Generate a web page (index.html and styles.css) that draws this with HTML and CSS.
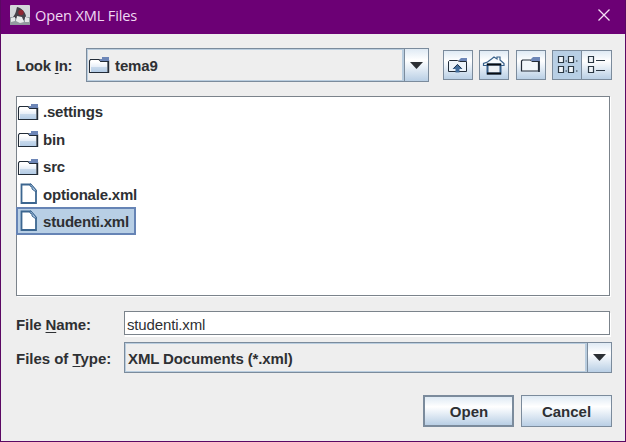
FILE: index.html
```html
<!DOCTYPE html>
<html lang="en">
<head>
<meta charset="utf-8">
<title>Open XML Files</title>
<link rel="stylesheet" href="styles.css">
</head>
<body>
<svg width="0" height="0" class="defs" aria-hidden="true">
  <defs>
    <linearGradient id="fold" x1="0" y1="0" x2="0" y2="1"><stop offset="0" stop-color="#fff"/><stop offset=".45" stop-color="#e8eff8"/><stop offset=".5" stop-color="#c9daec"/><stop offset="1" stop-color="#b4cce6"/></linearGradient>
    <symbol id="folder" viewBox="0 0 22 17">
      <path d="M1.500 15.500V4L2.500 2.500H11l2 2h7v11z" fill="#fff" stroke="#222c38" stroke-width="1.100"/>
      <path d="M3 5h16v10H3z" fill="url(#fold)"/>
      <path d="M12 4h8.500v12" fill="none" stroke="#222c38" stroke-width="1.400"/>
      <path d="M14 0h7v4h-9V2h2z" fill="#6d86b7"/>
    </symbol>
    <symbol id="file" viewBox="0 0 18 22">
      <path d="M1.500 1.500h9l5.500 6V20H1.500z" fill="#fff" stroke="#3c6690" stroke-width="1.800"/>
      <path d="M10 1v2l2 1v2l4 3V7l-5-6z" fill="#a7c2de" stroke="#3c6690" stroke-width="1"/>
    </symbol>
    <symbol id="arrow" viewBox="0 0 13 7"><path d="M0 0h13L6.500 7z" fill="#2b2f34"/></symbol>
  </defs>
</svg>
<div class="window">
  <header class="titlebar">
    <svg class="app" viewBox="0 0 20 20">
      <rect width="20" height="20" rx="1" fill="#d3d7da"/><path d="M0 12h20v8H0z" fill="#929a9f"/>
      <path d="M7 2c5 1 8 5 9 9l-2 4-9-2-2-1c3-3 3-7 4-10z" fill="#45424a"/>
      <path d="M7 11l5 1 2 5-4 1-4-2z" fill="#e8ebec"/><circle cx="11" cy="7.500" r="2.700" fill="#8f2733"/>
      <path d="M1 13l4-1v4l-4 1zM15 12l4 1v4h-4z" fill="#e4e7e9"/>
    </svg>
    <h1>Open XML Files</h1>
    <svg class="close" viewBox="0 0 12 12"><path d="M.5.5l11 11M11.500.5l-11 11" stroke="#f4dff5" stroke-width="1.300"/></svg>
  </header>
  <main>
    <div class="top">
      <label class="look">Look <u>I</u>n:</label>
      <div class="combo location"><div class="value"><svg class="folder"><use href="#folder"/></svg><span>tema9</span></div><div class="drop"><svg><use href="#arrow"/></svg></div></div>
      <div class="tools">
        <button class="tool"><svg viewBox="0 0 30 30">
          <path d="M5.500 21.500v-10l1-1h8l2 1h7v10z" fill="#edf4fa" stroke="#222c38"/><path d="M16 10l2-2h6v3h-8z" fill="#6d86b7"/>
          <path d="M14.500 14l5 5h-3v3.500h-4V19h-3z" fill="#426d9c"/><path d="M10.500 18.500l4-4 4 4" fill="none" stroke="#1e3650"/></svg></button>
        <button class="tool"><svg viewBox="0 0 30 30">
          <path d="M4.500 15.500v-2l4-1.500 4-3 2.500-2 3 2v-2h3v3l4 3.500v2z" fill="#f7fafc" stroke="#365f89" stroke-width="1.200"/>
          <path d="M8.500 14.500h13v9h-13z" fill="#eef1f4" stroke="#365f89" stroke-width="2"/><path d="M8 14.500h14M8 23.500h14" stroke="#080c10" stroke-width="2"/></svg></button>
        <button class="tool"><svg viewBox="0 0 30 30">
          <path d="M5.500 21V11l1-1h8l2 1.500h6V21z" fill="#f2f7fb" stroke="#222c38" stroke-width="1.200"/><path d="M23 10v12" stroke="#222c38" stroke-width="1.800"/><path d="M15 9l2-2h7v4h-9z" fill="#6d86b7"/></svg></button>
        <div class="views">
          <button class="tool on"><svg viewBox="0 0 30 30" fill="#f0f5fa" stroke="#2c3945" stroke-width="1.200"><path d="M6.500 6.500h5v6h-5zM16.500 6.500h5v6h-5zM6.500 16.500h5v6h-5zM16.500 16.500h5v6h-5z"/><path d="M13.500 11h1.500M24 11h1.500M13.500 21h1.500M24 21h1.500"/></svg></button>
          <button class="tool"><svg viewBox="0 0 30 30" fill="#f0f5fa" stroke="#2c3945" stroke-width="1.200"><path d="M6.500 6.500h5v6h-5zM6.500 16.500h5v6h-5z"/><path d="M14 10.500h9M14 20.500h9"/></svg></button>
        </div>
      </div>
    </div>
    <ul class="list">
      <li><svg class="folder"><use href="#folder"/></svg><span>.settings</span></li>
      <li><svg class="folder"><use href="#folder"/></svg><span>bin</span></li>
      <li><svg class="folder"><use href="#folder"/></svg><span>src</span></li>
      <li><svg class="file"><use href="#file"/></svg><span>optionale.xml</span></li>
      <li class="selected"><svg class="file"><use href="#file"/></svg><span>studenti.xml</span></li>
    </ul>
    <div class="row name"><label>File <u>N</u>ame:</label><div class="field">studenti.xml</div></div>
    <div class="row type"><label>Files of <u>T</u>ype:</label><div class="combo"><div class="value">XML Documents (*.xml)</div><div class="drop"><svg><use href="#arrow"/></svg></div></div></div>
    <div class="actions"><button class="default">Open</button><button>Cancel</button></div>
  </main>
</div>
</body>
</html>
```
FILE: styles.css
```css
* { box-sizing: border-box; }
body { margin: 0; font: bold 15px "Liberation Sans", Arial, sans-serif; color: #2e3033; }
.defs { position: absolute; }
svg { display: block; flex: none; }
.window { width: 626px; height: 442px; border: 1px solid #5b0863; border-top: 0; background: #eee; overflow: hidden; }
.titlebar { height: 34px; background: #6c0075; display: flex; align-items: center; padding: 0 15px 4px 9px; }
.app { width: 20px; height: 20px; }
h1 { margin: 0 0 0 5px; flex: 1; font: 14.6px "Open Sans", sans-serif; letter-spacing: -.15px; color: #efd9f2; }
.close { width: 12px; height: 12px; }
main { padding: 14px 13px 0 15px; }
.top { display: flex; height: 34px; }
label { flex: none; }
.look { width: 70px; line-height: 35px; letter-spacing: -.25px; }
u { text-decoration-thickness: 1px; text-underline-offset: 2px; }
.combo { display: flex; border: 1px solid #7b8b9c; background: #eee; }
.value { flex: 1; display: flex; align-items: center; border: 1px solid #b9cddf; border-right-width: 2px; padding-left: 2px; letter-spacing: -.12px; }
.value .folder { margin: 0 5px 0 -2px; }
.drop { display: flex; align-items: center; justify-content: center; width: 24px; border-left: 1px solid #7b8b9c; background: linear-gradient(#dfeaf4, #fff 35%, #edf3f9 52%, #b9cfe5); }
.drop svg { width: 13px; height: 7px; }
.location { width: 343px; }
.folder { width: 22px; height: 17px; }
.tools { display: flex; margin: 2px 0 0 14px; gap: 6px; }
button { font: inherit; color: inherit; padding: 0; border: 1px solid #7b8b9c; background: linear-gradient(#dfeaf4, #fff 35%, #edf3f9 52%, #b9cfe5); }
.tool { width: 30px; height: 30px; display: flex; align-items: center; justify-content: center; }
.tool svg { width: 30px; height: 30px; }
.tool:nth-child(3) { margin-left: 1px; }
.views { display: flex; }
.tool.on { background: #b8cfe5; }
.views .tool + .tool { width: 31px; margin-left: -1px; }
.list { margin: 14px 2px 0 0; padding: 0; list-style: none; height: 200px; background: #fff; border: 1px solid #7b838b; box-shadow: 1px 1px #fff; }
li { display: flex; align-items: center; height: 27.5px; width: 120px; padding-top: 2px; }
li .folder { margin-top: 1px; }
li span { margin-left: 4px; white-space: nowrap; letter-spacing: -.2px; }
.file { width: 18px; height: 22px; margin: 0 1px 0 3px; }
.selected { border: 2px solid #6684b5; background: #b8cfe5; margin-left: -1px; }
.selected .file { margin: -1px 1px 0 2px; }
.row { display: flex; align-items: center; }
.row label { width: 108px; letter-spacing: -.1px; }
.name { height: 24px; margin-top: 15px; }
.name label { padding-top: 2px; }
.field { width: 486px; height: 24px; padding: 3px 2px 0; line-height: 19px; font-weight: normal; letter-spacing: -.15px; background: #fff; border: 1px solid #7b838b; box-shadow: 1px 2px #fff; }
.type { height: 31px; margin-top: 7px; }
.type label { padding-top: 2px; letter-spacing: -.02px; }
.type .combo { flex: 1; height: 31px; }
.type .value { padding-top: 2px; }
.actions { display: flex; justify-content: flex-end; gap: 7px; margin-top: 22px; }
.actions button { width: 91px; height: 32px; }
.actions .default { border-width: 2px; padding-left: 1px; }
```
